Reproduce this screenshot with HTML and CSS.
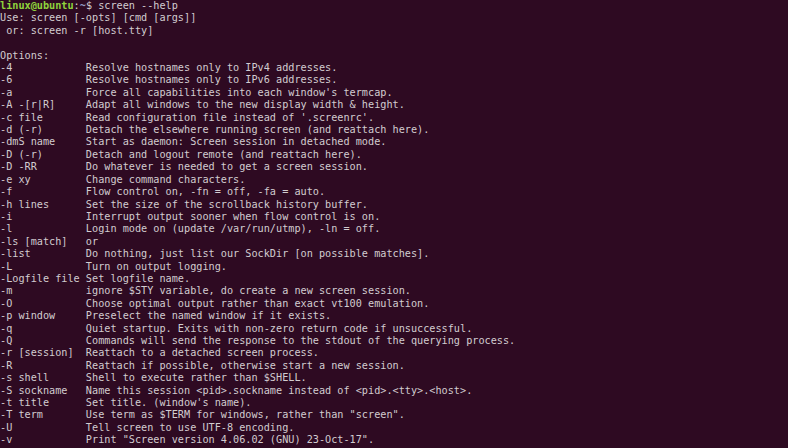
FILE: index.html
```html
<!DOCTYPE html>
<html>
<head>
<meta charset="utf-8">
<link rel="stylesheet" href="styles.css">
</head>
<body>
<pre class="term"><span class="user">linux@ubuntu</span>:<span class="path">~</span>$ screen --help
Use: screen [-opts] [cmd [args]]
 or: screen -r [host.tty]

Options:
-4            Resolve hostnames only to IPv4 addresses.
-6            Resolve hostnames only to IPv6 addresses.
-a            Force all capabilities into each window's termcap.
-A -[r|R]     Adapt all windows to the new display width &amp; height.
-c file       Read configuration file instead of '.screenrc'.
-d (-r)       Detach the elsewhere running screen (and reattach here).
-dmS name     Start as daemon: Screen session in detached mode.
-D (-r)       Detach and logout remote (and reattach here).
-D -RR        Do whatever is needed to get a screen session.
-e xy         Change command characters.
-f            Flow control on, -fn = off, -fa = auto.
-h lines      Set the size of the scrollback history buffer.
-i            Interrupt output sooner when flow control is on.
-l            Login mode on (update /var/run/utmp), -ln = off.
-ls [match]   or
-list         Do nothing, just list our SockDir [on possible matches].
-L            Turn on output logging.
-Logfile file Set logfile name.
-m            ignore $STY variable, do create a new screen session.
-O            Choose optimal output rather than exact vt100 emulation.
-p window     Preselect the named window if it exists.
-q            Quiet startup. Exits with non-zero return code if unsuccessful.
-Q            Commands will send the response to the stdout of the querying process.
-r [session]  Reattach to a detached screen process.
-R            Reattach if possible, otherwise start a new session.
-s shell      Shell to execute rather than $SHELL.
-S sockname   Name this session &lt;pid&gt;.sockname instead of &lt;pid&gt;.&lt;tty&gt;.&lt;host&gt;.
-t title      Set title. (window's name).
-T term       Use term as $TERM for windows, rather than "screen".
-U            Tell screen to use UTF-8 encoding.
-v            Print "Screen version 4.06.02 (GNU) 23-Oct-17".</pre>
</body>
</html>
```
FILE: styles.css
```css
html, body {
  margin: 0;
  padding: 0;
  background: #2e0a22;
  height: 100%;
  overflow: hidden;
}
.term {
  margin: 0;
  padding: 0 0 0 0;
  font-family: "DejaVu Sans Mono", "Liberation Mono", monospace;
  font-size: 10.2px;
  line-height: 12.4px;
  color: #d2ccd0;
  white-space: pre;
}
.user {
  color: #8fd43c;
  font-weight: bold;
}
.path {
  color: #9198c4;
  font-weight: bold;
}
```
